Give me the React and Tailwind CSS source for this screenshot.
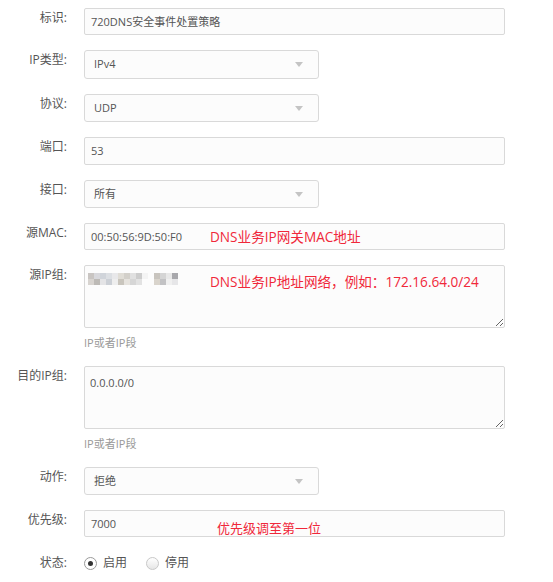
import React from "react";

const font = { fontFamily: '"Open Sans", "Noto Sans CJK SC", sans-serif' };

const mosaic = [
  ["#c9c5c2", "#d8d8dc", "#d0d4da", "#dcdfe3", "#e8e8ea", "#e0ddd6", "#d3d0ca", "#e0e0e0", "#cccccc", "#f4f4f4", null, "#c8c4be", "#d5d5d5", "#e8e8e8", "#a8a8ac"],
  ["#d8d4d0", "#bdbab6", "#e4e4e6", "#ccd0d6", "#eeeeee", "#c9c5bd", "#e6e3de", "#d6d6d6", "#e2e2e2", null, null, "#d9d4cc", "#c2c2c4", "#f0f0f0", "#e6e6e8"],
];

function Label({ children }) {
  return (
    <div className="w-[67px] shrink-0 text-right text-[12px] leading-[20px] text-[#555]">
      {children}
    </div>
  );
}

function Row({ label, children }) {
  return (
    <div className="flex gap-[17px]">
      <Label>{label}</Label>
      <div className="relative">{children}</div>
    </div>
  );
}

function TextBox({ value, h = "h-[28px]" }) {
  return (
    <div
      className={`w-[421px] ${h} flex items-center pl-[6px] pt-[1px] border border-[#d9d9d9] rounded-[2px] bg-[#fcfcfc] text-[11px] text-[#555]`}
    >
      {value}
    </div>
  );
}

function Select({ value, h = "h-[28px]" }) {
  return (
    <div
      className={`w-[235px] ${h} flex items-center justify-between pl-[9px] pr-[15px] border border-[#d9d9d9] rounded-[3px] bg-[#fcfcfc] text-[11px] text-[#555]`}
    >
      <span>{value}</span>
      <span className="w-0 h-0 border-x-[4px] border-x-transparent border-t-[5px] border-t-[#c4c4c4]" />
    </div>
  );
}

function Area({ value, children }) {
  return (
    <div>
      <div className="relative">
        <textarea
          readOnly
          value={value}
          className="block w-[421px] h-[63px] px-[5px] pt-[8px] leading-[16px] border border-[#d9d9d9] rounded-[2px] bg-[#fcfcfc] text-[11px] text-[#555] outline-none"
          style={font}
        />
        {children}
      </div>
      <div className="mt-[7px] h-[16px] text-[11px] leading-[16px] text-[#999]">IP或者IP段</div>
    </div>
  );
}

function Red({ className, children }) {
  return (
    <div className={`absolute whitespace-nowrap leading-[20px] text-[#f0283a] ${className}`}>
      {children}
    </div>
  );
}

export default function App() {
  return (
    <div className="w-[553px] h-[582px] bg-white pt-[8px] flex flex-col gap-[15px]" style={font}>
      <Row label="标识:">
        <TextBox value="720DNS安全事件处置策略" h="h-[27px]" />
      </Row>
      <Row label="IP类型:">
        <Select value="IPv4" h="h-[29px]" />
      </Row>
      <Row label="协议:">
        <Select value="UDP" />
      </Row>
      <Row label="端口:">
        <TextBox value="53" />
      </Row>
      <Row label="接口:">
        <Select value="所有" />
      </Row>
      <Row label="源MAC:">
        <TextBox value="00:50:56:9D:50:F0" h="h-[27px]" />
        <Red className="left-[126px] top-[4px] text-[13.6px]">DNS业务IP网关MAC地址</Red>
      </Row>
      <Row label="源IP组:">
        <Area value="">
          <div className="absolute left-[4px] top-[8px] flex flex-col">
            {mosaic.map((row, i) => (
              <div key={i} className="flex">
                {row.map((c, j) => (
                  <div
                    key={j}
                    className="w-[6px] h-[6px]"
                    style={{ backgroundColor: c || "transparent" }}
                  />
                ))}
              </div>
            ))}
          </div>
          <Red className="left-[126px] top-[7px] text-[13.6px]">DNS业务IP地址网络，例如：172.16.64.0/24</Red>
        </Area>
      </Row>
      <Row label="目的IP组:">
        <Area value="0.0.0.0/0" />
      </Row>
      <Row label="动作:">
        <Select value="拒绝" />
      </Row>
      <Row label="优先级:">
        <TextBox value="7000" h="h-[27px]" />
        <Red className="left-[133px] top-[8px] text-[13px]">优先级调至第一位</Red>
      </Row>
      <div className="flex gap-[17px] mt-[1px]">
        <Label>状态:</Label>
        <div className="flex items-center h-[20px] text-[12px] text-[#555]">
          <span className="w-[13px] h-[13px] rounded-full border border-[#9a9a9a] bg-white flex items-center justify-center">
            <span className="w-[5px] h-[5px] rounded-full bg-[#333]" />
          </span>
          <span className="ml-[6px]">启用</span>
          <span className="ml-[19px] w-[13px] h-[13px] rounded-full border border-[#c8c8c8] bg-gradient-to-b from-white to-[#e6e6e6]" />
          <span className="ml-[6px]">停用</span>
        </div>
      </div>
    </div>
  );
}
